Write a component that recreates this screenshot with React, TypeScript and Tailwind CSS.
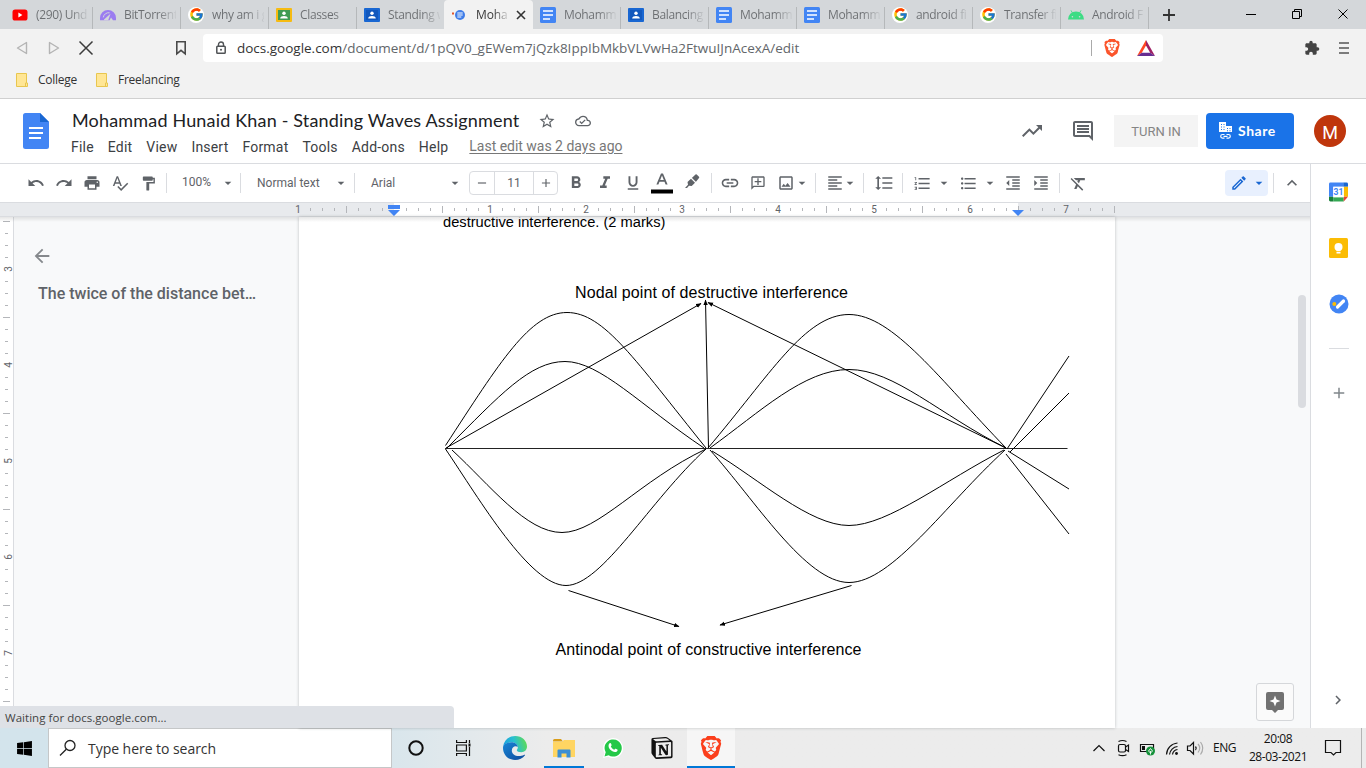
import React from "react";
import { FaWindows } from "react-icons/fa";
import { FcGoogle } from "react-icons/fc";
import { SiBrave, SiNotion } from "react-icons/si";
import {
  MdUndo, MdRedo, MdPrint, MdSpellcheck, MdFormatPaint, MdArrowDropDown, MdFormatBold, MdFormatItalic,
  MdFormatUnderlined, MdInsertLink, MdOutlineAddComment, MdOutlineImage, MdFormatAlignLeft, MdFormatLineSpacing,
  MdFormatListNumbered, MdFormatListBulleted, MdFormatIndentDecrease, MdFormatIndentIncrease, MdFormatClear,
  MdExpandLess, MdStarBorder, MdOutlineCloudDone, MdTrendingUp, MdOutlineComment, MdArrowBack, MdAdd,
  MdExtension, MdChevronRight, MdRemove, MdOutlineEdit,
} from "react-icons/md";

const segoe = "font-['Open_Sans','Noto_Sans',sans-serif]";

function YouTube() {
  return (
    <svg width="16" height="16" viewBox="0 0 16 16">
      <rect x="0.5" y="2.5" width="15" height="11" rx="2.6" fill="#f00" />
      <path d="M6.4 5.6v4.8L10.4 8z" fill="#fff" />
    </svg>
  );
}
function Gauge() {
  return (
    <svg width="16" height="16" viewBox="0 0 16 16">
      <path d="M0 13.2V11a8 8 0 0 1 16 0V13.2H13L11 10.6 9.6 13.2Z" fill="#9b7cf0" />
      <path d="M4 12.600L10.500 6.800 8.200 13.200H4Z" fill="#d4d7da" />
      <path d="M3.300 10.400A5.400 5.400 0 0 1 9.600 5.800" stroke="#d4d7da" strokeWidth="1" fill="none" />
    </svg>
  );
}
function GoogleG() {
  return (
    <span className="flex size-4 items-center justify-center rounded-full bg-white">
      <FcGoogle size={15} />
    </span>
  );
}
function Classroom({ blue = false }: { blue?: boolean }) {
  return (
    <svg width="16" height="16" viewBox="0 0 16 16">
      <rect y="1" width="16" height="14" rx="1" fill={blue ? "#1967d2" : "#f6bb12"} />
      <rect x="2" y="3" width="12" height="10" fill={blue ? "#1258bd" : "#3f9b52"} />
      <circle cx="8" cy="6.3" r="1.7" fill="#fff" />
      <path d="M4.2 11.5c0-2 2-2.6 3.8-2.6s3.8.6 3.8 2.6z" fill="#fff" />
    </svg>
  );
}
function DocsFavicon() {
  return (
    <svg width="16" height="16" viewBox="0 0 16 16">
      <rect width="16" height="16" rx="1.5" fill="#4285f4" />
      <path d="M3 4h10M3 8h10M3 12h7" stroke="#fff" strokeWidth="1.6" />
    </svg>
  );
}
function LoadingDocs() {
  return (
    <svg width="16" height="16" viewBox="0 0 16 16">
      <circle cx="9" cy="8" r="5" fill="#3f7de8" />
      <path d="M6.3 6h5.4M6.3 8h5.4M6.3 10h4" stroke="#fff" strokeWidth="1.1" />
      <rect x="1" y="5.5" width="2" height="2" fill="#e2552b" />
    </svg>
  );
}
function AndroidHead() {
  return (
    <svg width="16" height="16" viewBox="0 0 16 16">
      <path d="M0 12.500A8 8 0 0 1 16 12.500Z" fill="#3ddc84" />
      <path d="M3 3.400L5 7M13 3.400L11 7" stroke="#3ddc84" strokeWidth="0.900" />
      <circle cx="4.400" cy="9.800" r="0.800" fill="#d4d7da" />
      <circle cx="11.600" cy="9.800" r="0.800" fill="#d4d7da" />
    </svg>
  );
}

function Tab({ icon, label, sep = true, first = false }: { icon: React.ReactNode; label: string; sep?: boolean; first?: boolean }) {
  return (
    <div className={`flex h-full shrink-0 items-center ${first ? "w-[93px] pl-3" : "w-[88px] pl-[7px]"}`}>
      <span className="flex size-4 shrink-0 items-center justify-center">{icon}</span>
      <span className="ml-2 w-[52px] overflow-hidden whitespace-nowrap bg-linear-to-r from-[#6b6e71] from-65% to-[#6b6e71]/10 bg-clip-text text-[12px] leading-4 tracking-[-0.35px] text-transparent">
        {label}
      </span>
      <span className={`mt-[7px] ml-auto h-[22px] w-px ${sep ? "bg-[#b5b8ba]" : ""}`} />
    </div>
  );
}

function TabStrip() {
  return (
    <div className="flex h-[29px] bg-[#d4d7da]">
      <Tab first icon={<YouTube />} label="(290) Und" />
      <Tab icon={<Gauge />} label="BitTorrent" />
      <Tab icon={<GoogleG />} label="why am i g" />
      <Tab icon={<Classroom />} label="Classes" />
      <Tab icon={<Classroom blue />} label="Standing w" sep={false} />
      <div className="-ml-[1px] flex h-full w-[89px] shrink-0 items-center rounded-t-[4px] bg-[#f2f2f2] pl-[7px]">
        <LoadingDocs />
        <span className="ml-[9px] w-[32px] overflow-hidden whitespace-nowrap bg-linear-to-r from-[#333] from-55% to-[#333]/15 bg-clip-text text-[12px] leading-4 tracking-[-0.1px] text-transparent">
          Moha
        </span>
        <svg className="ml-2" width="10" height="10" viewBox="0 0 10 10">
          <path d="M1 1l8 8M9 1L1 9" stroke="#333" strokeWidth="1.6" />
        </svg>
      </div>
      <Tab icon={<DocsFavicon />} label="Mohamm" />
      <Tab icon={<Classroom blue />} label="Balancing" />
      <Tab icon={<DocsFavicon />} label="Mohamm" />
      <Tab icon={<DocsFavicon />} label="Mohamm" />
      <Tab icon={<GoogleG />} label="android fi" />
      <Tab icon={<GoogleG />} label="Transfer fi" />
      <Tab icon={<AndroidHead />} label="Android F" />
      <svg className="mt-[9px] ml-[14px]" width="12" height="12" viewBox="0 0 12 12">
        <path d="M6 0v12M0 6h12" stroke="#333" strokeWidth="1.8" />
      </svg>
      <svg className="ml-auto" width="140" height="29" viewBox="1226 0 140 29" fill="none" stroke="#000">
        <path d="M1246 14.5h10" />
        <path d="M1292.5 11.500h7v7h-7zM1294.500 11.500v-2h7v7h-2" />
        <path d="M1338.500 9.500l9 9M1347.500 9.500l-9 9" />
      </svg>
    </div>
  );
}

function NavBar() {
  return (
    <div className="flex h-[38px] items-center bg-[#f2f2f2]">
      <svg width="203" height="38" viewBox="0 29 203 38" fill="none">
        <path d="M26.500 42.500v11l-9-5.500z" stroke="#b4b4b4" strokeWidth="1.400" strokeLinejoin="round" />
        <path d="M49.500 42.500v11l9-5.500z" stroke="#b4b4b4" strokeWidth="1.400" strokeLinejoin="round" />
        <path d="M79.500 41.500l13 13M92.500 41.500l-13 13" stroke="#3c3c3c" strokeWidth="1.500" />
        <path d="M176.800 41.800h8.400v12l-4.200-3.500-4.200 3.500z" stroke="#4a4a4a" strokeWidth="1.600" />
      </svg>
      <div className="flex h-7 w-[960px] items-center rounded bg-white pl-[13px]">
        <svg width="10" height="14" viewBox="0 0 10 14" fill="none">
          <rect x="0.800" y="5.300" width="8.400" height="7" rx="0.800" stroke="#505356" strokeWidth="1.500" />
          <path d="M2.500 5V3.500a2.500 2.500 0 0 1 5 0V5" stroke="#505356" strokeWidth="1.400" />
          <circle cx="5" cy="8.800" r="1" fill="#505356" />
        </svg>
        <span className="ml-[11px] whitespace-nowrap text-[13.500px] tracking-[-0.01px] text-[#62666a]">
          <span className="text-[#333]">docs.google.com</span>/document/d/1pQV0_gEWem7jQzk8IppIbMkbVLVwHa2FtwuIJnAcexA/edit
        </span>
        <span className="ml-auto h-4 w-px bg-[#aaa]" />
        <SiBrave className="ml-[11px] text-[#fb542b]" size={18} />
        <svg className="mr-[8px] ml-4" width="18" height="16" viewBox="0 0 18 16">
          <path d="M9 0L0 16 4.800 12.700 9 5.500z" fill="#ff4724" />
          <path d="M9 0l9 16-4.800-3.300L9 5.500z" fill="#9e1f63" />
          <path d="M0 16h18l-4.800-3.300H4.800z" fill="#662d91" />
        </svg>
      </div>
      <MdExtension className="ml-[141px] text-[#444]" size={16} />
      <svg className="ml-[19px]" width="10" height="12" viewBox="0 0 10 12">
        <path d="M0 1h10M0 6h10M0 11h10" stroke="#555" strokeWidth="1.600" />
      </svg>
    </div>
  );
}

function Folder() {
  return (
    <svg width="12" height="14" viewBox="0 0 12 14">
      <path d="M.5.500h10v9.500h1v3.500h-11z" fill="#ffe695" stroke="#e8c64f" />
      <path d="M9.500 13.500v-3.500h1" fill="none" stroke="#e8c64f" />
    </svg>
  );
}

function Bookmarks() {
  return (
    <div className="flex h-8 items-start border-b border-[#d0d0d0] bg-[#f2f2f2] pt-[5px] pl-4 text-[12px] leading-4 tracking-[-0.25px] text-[#333]">
      <span className="flex w-20 items-center gap-[10px]"><Folder />College</span>
      <span className="flex items-center gap-[10px]"><Folder />Freelancing</span>
    </div>
  );
}

function Header() {
  return (
    <header className="flex h-[65px] border-b border-[#dadce0] bg-white font-[Roboto,sans-serif]">
      <svg className="mt-[14px] ml-[23px] shrink-0" width="26" height="36" viewBox="0 0 26 36">
        <path d="M2.500 0H17l9 9v24.500a2.500 2.500 0 0 1-2.500 2.500h-21A2.500 2.500 0 0 1 0 33.500v-31A2.500 2.500 0 0 1 2.500 0z" fill="#4285f4" />
        <path d="M17 0l9 9h-9z" fill="#1967d2" />
        <path d="M6 15h14M6 20h14M6 25h12" stroke="#fff" strokeWidth="2" />
      </svg>
      <div className="ml-[22px] pt-[10px]">
        <div className="flex h-6 items-center pl-px">
          <span className="w-[447px] -translate-y-px whitespace-nowrap font-[Lato,sans-serif] text-[18px] tracking-[0.17px] text-[#202124]">
            Mohammad Hunaid Khan - Standing Waves Assignment
          </span>
          <MdStarBorder className="ml-[19px] text-[#5f6368]" size={18} />
          <MdOutlineCloudDone className="ml-[19px] text-[#5f6368]" size={16} />
        </div>
        <div className="mt-[5px] flex h-[18px] items-center gap-[14px] text-[14px] leading-[18px] tracking-[0.2px] text-[#3c4043]">
          <span>File</span><span>Edit</span><span>View</span><span>Insert</span><span>Format</span>
          <span>Tools</span><span>Add-ons</span><span>Help</span>
          <span className="ml-[7px] -translate-y-px tracking-[-0.02px] text-[#777] underline underline-offset-2">Last edit was 2 days ago</span>
        </div>
      </div>
      <div className="ml-auto flex h-16 items-center pr-5">
        <MdTrendingUp className="text-[#5f6368]" size={24} />
        <MdOutlineComment className="ml-[27px] text-[#5f6368]" size={24} />
        <span className="ml-[19px] flex h-8 w-[84px] items-center justify-center bg-[#f4f4f4] text-[13px] text-[#858585]"><span className="translate-y-px">TURN IN</span></span>
        <span className="ml-2 flex h-9 w-[88px] items-center rounded bg-[#1a73e8] pl-[13px] text-white">
          <svg width="14" height="18" viewBox="0 0 14 18">
            <path d="M0 0h7v4h6v6H0z" fill="#fff" />
            <path d="M2 2h1v1H2zM4.500 2h1v1h-1zM2 4.500h1v1H2zM4.500 4.500h1v1h-1zM2 7h1v1H2zM4.500 7h1v1h-1zM8 6h1v1H8zM10.500 6h1v1h-1zM8 8.300h1v1H8zM10.500 8.300h1v1h-1z" fill="#1a73e8" />
            <path d="M5.500 12.500h-2a1.800 1.800 0 0 0 0 3.600h2M7.500 12.500h2a1.800 1.800 0 0 1 0 3.600h-2M4.500 14.300h4" stroke="#fff" strokeWidth="1.200" fill="none" />
          </svg>
          <span className="ml-[5px] -translate-y-px font-[Lato,sans-serif] text-[14px] font-bold tracking-[0.55px]">Share</span>
        </span>
        <span className="ml-5 flex size-8 items-center justify-center rounded-full bg-[#bf360c] text-[18px] text-white"><span className="translate-y-px">M</span></span>
      </div>
    </header>
  );
}

const Sep = ({ className = "" }: { className?: string }) => <span className={`h-5 w-px shrink-0 bg-[#dadce0] ${className}`} />;
const Cell = ({ className, children }: { className: string; children: React.ReactNode }) => (
  <span className={`flex shrink-0 items-center justify-center ${className}`}>{children}</span>
);
const Caret = ({ className = "" }: { className?: string }) => (
  <Cell className={`w-4 ${className}`}><MdArrowDropDown size={18} /></Cell>
);

function Toolbar() {
  return (
    <div className="flex h-[39px] items-center border-b border-[#dadce0] bg-white pl-[22px] font-[Roboto,sans-serif] text-[12px] text-[#5f6368]">
      <Cell className="w-7"><MdUndo size={18} /></Cell>
      <Cell className="w-7"><MdRedo size={18} /></Cell>
      <Cell className="w-7"><MdPrint size={18} /></Cell>
      <Cell className="w-7"><MdSpellcheck size={18} /></Cell>
      <Cell className="w-7"><MdFormatPaint size={17} /></Cell>
      <Sep className="ml-1" />
      <span className="ml-[15px] w-[38px] -translate-y-px">100%</span>
      <Caret />
      <Sep className="ml-1" />
      <span className="ml-4 w-[76px] whitespace-nowrap">Normal text</span>
      <Caret />
      <Sep className="ml-[5px]" />
      <span className="ml-4 w-[76px]">Arial</span>
      <Caret />
      <div className="ml-[6px] flex h-6 w-[89px] rounded-sm border border-[#dadce0]">
        <Cell className="w-6"><MdRemove size={14} /></Cell>
        <Cell className="w-10 border-x border-[#dadce0]">11</Cell>
        <Cell className="w-6"><MdAdd size={14} /></Cell>
      </div>
      <Cell className="ml-1 w-7"><MdFormatBold size={20} /></Cell>
      <Cell className="ml-px w-7"><MdFormatItalic size={20} /></Cell>
      <Cell className="w-7"><MdFormatUnderlined size={18} /></Cell>
      <Cell className="w-[30px]">
        <svg width="22" height="22" viewBox="0 0 22 22">
          <path d="M10 1.500h2l4.600 11h-2l-1.100-2.700h-5L7.400 12.500h-2zM9.200 8h3.600L11 3.600z" fill="#5f6368" />
          <path d="M0 17.500h22v4H0z" fill="#000" />
        </svg>
      </Cell>
      <Cell className="w-[30px] -translate-y-px">
        <svg width="16" height="16" viewBox="0 0 16 16" fill="#5f6368">
          <path d="M1 14l3-3.200L3.500 8 7 4.700 11 8.700 7.700 12 5 11.700 3 14z" />
          <path d="M7.800 4L11.500.500q.600-.500 1.200 0l2.300 2.300q.600.600 0 1.200L11.800 7.900z" />
          <path d="M7.200 3.800l5 5" stroke="#fff" strokeWidth="0.800" />
        </svg>
      </Cell>
      <Sep className="ml-[4px]" />
      <Cell className="ml-[4px] w-7"><MdInsertLink size={20} /></Cell>
      <Cell className="w-7"><MdOutlineAddComment className="-scale-x-100" size={16} /></Cell>
      <Cell className="w-[27px]"><MdOutlineImage size={18} /></Cell>
      <Caret className="-ml-[5px]" />
      <Sep className="ml-[5px]" />
      <Cell className="ml-[5px] w-7"><MdFormatAlignLeft size={18} /></Cell>
      <Caret className="-ml-[7px]" />
      <Sep className="ml-[5px]" />
      <Cell className="ml-[6px] w-7"><MdFormatLineSpacing size={20} /></Cell>
      <Sep className="ml-[4px]" />
      <Cell className="ml-[5px] w-7"><MdFormatListNumbered size={19} /></Cell>
      <Caret />
      <Cell className="ml-[2px] w-7"><MdFormatListBulleted size={19} /></Cell>
      <Caret />
      <Cell className="ml-[1px] w-7"><MdFormatIndentDecrease size={18} /></Cell>
      <Cell className="w-7"><MdFormatIndentIncrease size={18} /></Cell>
      <Sep className="ml-[4px]" />
      <Cell className="ml-[4px] w-7"><MdFormatClear size={19} /></Cell>
      <div className="ml-auto flex h-[26px] w-[43px] shrink-0 items-center rounded bg-[#e8f0fe] pl-[5px] text-[#1967d2]">
        <MdOutlineEdit size={18} />
        <Caret className="ml-[3px]" />
      </div>
      <Sep className="ml-[5px]" />
      <Cell className="mr-2 ml-[8px] w-5"><MdExpandLess size={20} /></Cell>
    </div>
  );
}

const hTicks = Array.from({ length: 69 }, (_, i) => 298 + i * 12);
const vTicks = Array.from({ length: 41 }, (_, i) => 221 + i * 12);

function HorizontalRuler() {
  return (
    <svg className="block h-[14px] w-full shrink-0 border-b border-[#dadce0]" viewBox="0 203 1310 13" preserveAspectRatio="none">
      <rect x="0" y="203" width="1310" height="13" fill="#e8eaed" />
      <rect x="394" y="203" width="624" height="13" fill="#fff" />
      {hTicks.map((x, i) =>
        i % 8 === 0 ? null : i % 4 === 0 || i === 68 ? (
          <rect key={x} x={x} y="206" width="1" height="7" fill="#b4b6ba" />
        ) : (
          <rect key={x} x={x} y="208" width="1" height="3" fill="#b4b6ba" />
        ),
      )}
      {[1, 0, 1, 2, 3, 4, 5, 6, 7].map((n, i) =>
        i === 1 ? null : (
          <text key={i} x={298 + i * 96} y="213" textAnchor="middle" fontSize="10" fontFamily="Roboto" fill="#5f6368">{n}</text>
        ),
      )}
      <path d="M388 205h12v4h-12zM388 210h12l-6 6z" fill="#4285f4" />
      <path d="M1012 210h12l-6 6z" fill="#4285f4" />
    </svg>
  );
}

function VerticalRuler() {
  return (
    <svg className="block h-full w-[14px] shrink-0 border-r border-[#dadce0] bg-white" viewBox="0 217 13 511">
      {vTicks.map((y, i) =>
        i % 8 === 4 ? (
          <text key={y} transform={`translate(11.500 ${y}) rotate(-90)`} textAnchor="middle" fontSize="10" fontFamily="Roboto" fill="#5f6368">
            {3 + (i - 4) / 8}
          </text>
        ) : (
          <rect key={y} x={i % 8 === 0 ? 3 : 5} y={y} width={i % 8 === 0 ? 7 : 3} height="1" fill="#b4b6ba" />
        ),
      )}
    </svg>
  );
}

function WaveDiagram() {
  return (
    <svg className="block" width="672" height="480" viewBox="443 240 672 480">
      <defs>
        <marker id="tip" markerWidth="6" markerHeight="5" refX="5" refY="2.500" orient="auto" markerUnits="userSpaceOnUse">
          <path d="M0 0.300L5.500 2.500 0 4.700z" fill="#000" />
        </marker>
      </defs>
      <g fontFamily="Liberation Sans" fontSize="16" fill="#000">
        <text x="575" y="297.500" textLength="273">Nodal point of destructive interference</text>
        <text x="555.500" y="655" textLength="306">Antinodal point of constructive interference</text>
      </g>
      <g stroke="#000" strokeWidth="1" fill="none">
        <path d="M445 448.500H1067.500" stroke="#222" />
        <path d="M445.500 445.500C500 362 530 312.500 567 312.500S635 360 706 448" />
        <path d="M447 448C500 395 530 361.500 565 361.500S640 405 704 448" />
        <path d="M452 450C490 485 526 532.500 562 532.500S640 480 706 449" />
        <path d="M445.500 449C480 500 530 585.500 566 585.500S650 500 706 449" />
        <path d="M708 448C770 375 805 314.500 849 314.500S940 380 1006 448" />
        <path d="M710 448C760 412 804 369.500 849 369.500S940 415 1006 448" />
        <path d="M712 451C760 480 810 525.500 849 525.500S945 480 1004 450" />
        <path d="M710 450C755 500 806 582.500 849 582.500S945 505 1005 450" />
        <path d="M1007 449L1069 356M1010 452L1069 393M1008 451L1069 489M1006 454L1069 534" />
        <path d="M446 448L701 303.500" markerEnd="url(#tip)" />
        <path d="M708.500 448L705.500 300" markerEnd="url(#tip)" />
        <path d="M1006 448L708 302.500" markerEnd="url(#tip)" />
        <path d="M568.500 590.500L679 626.500" markerEnd="url(#tip)" />
        <path d="M851.500 585.500L720 625" markerEnd="url(#tip)" />
      </g>
    </svg>
  );
}

function Editor() {
  return (
    <div className="relative flex min-h-0 flex-1 bg-[#f8f9fa]">
      <VerticalRuler />
      <aside className="w-[285px] shrink-0 pl-6 font-[Roboto,sans-serif]">
        <MdArrowBack className="mt-[28px] -ml-[7px] text-[#85888c]" size={22} />
        <div className="mt-[17px] whitespace-nowrap text-[16px] leading-5 font-medium text-[#5f6368]">The twice of the distance bet…</div>
      </aside>
      <main className="w-[816px] shrink-0 overflow-hidden bg-white pl-36 shadow-[0_0_3px_rgba(60,64,67,0.3)]">
        <p className="-mt-[3px] h-[26px] font-['Liberation_Sans',Arial,sans-serif] text-[14.667px] leading-4 text-black">
          destructive interference. (2 marks)
        </p>
        <WaveDiagram />
      </main>
      <div className="flex flex-1 flex-col items-end">
        <div className="mt-[78px] mr-[4px] h-[113px] w-2 rounded bg-[#dadce0]" />
        <div className="mt-auto mr-[16px] mb-[7px] flex size-[38px] items-center justify-center rounded-[3px] border border-[#d5d7da] bg-[#fafafa]">
          <svg width="18" height="21" viewBox="0 0 18 21">
            <path d="M2 0h14a2 2 0 0 1 2 2v14a2 2 0 0 1-2 2h-4l-3 3-3-3H2a2 2 0 0 1-2-2V2a2 2 0 0 1 2-2z" fill="#717171" />
            <path d="M9 3.500l1.500 4 4 1.500-4 1.500L9 14.500l-1.500-4-4-1.500 4-1.500z" fill="#fff" />
          </svg>
        </div>
      </div>
      <div className="absolute inset-x-0 top-0 h-[5px] bg-linear-to-b from-black/10 to-transparent" />
    </div>
  );
}

function SidePanel() {
  return (
    <nav className="flex w-14 shrink-0 flex-col items-center border-l border-[#dadce0] bg-white pt-[18px]">
      <svg width="19" height="20" viewBox="0 0 20 20">
        <path d="M1.500 0H15v4.500H4.500V15H0V1.500A1.500 1.500 0 0 1 1.500 0z" fill="#4285f4" />
        <path d="M15 0h3.500A1.500 1.500 0 0 1 20 1.500V4.500h-5z" fill="#1967d2" />
        <path d="M15.500 4.500H20V15h-4.500z" fill="#fbbc04" />
        <path d="M4.500 15.500h11V20h-11z" fill="#34a853" />
        <path d="M0 15h4.500v5h-3A1.500 1.500 0 0 1 0 18.500z" fill="#188038" />
        <path d="M15.500 15H20l-4.500 5z" fill="#ea4335" />
        <path d="M4.500 4.500h11v11h-11z" fill="#fff" />
        <text x="10" y="13.400" textAnchor="middle" fontFamily="Roboto" fontWeight="700" fontSize="9" fill="#4285f4">31</text>
      </svg>
      <svg className="mt-9" width="19" height="20" viewBox="0 0 19 20">
        <rect width="19" height="20" rx="1.500" fill="#fbbc04" />
        <circle cx="9.500" cy="9" r="4" fill="#fff" />
        <path d="M7.500 11h4v2.200h-4zM7.500 14h4v1.400h-4z" fill="#fff" />
      </svg>
      <svg className="mt-9" width="20" height="20" viewBox="0 0 20 20">
        <circle cx="10" cy="10" r="9.500" fill="#4285f4" />
        <path d="M8.500 13L14.500 7" stroke="#fff" strokeWidth="3.200" strokeLinecap="round" />
        <circle cx="5.300" cy="10" r="2" fill="#fbbc04" />
      </svg>
      <span className="mt-[34px] h-px w-5 bg-[#dadce0]" />
      <MdAdd className="mt-[35px] text-[#80868b]" size={18} />
      <MdChevronRight className="mt-auto mb-[19px] -ml-[2px] text-[#5f6368]" size={18} />
    </nav>
  );
}

function Edge() {
  return (
    <svg width="24" height="24" viewBox="0 0 24 24">
      <defs>
        <linearGradient id="edgeTop" x1="0" y1="0.600" x2="1" y2="0.400">
          <stop offset="0" stopColor="#1a9ee0" /><stop offset="0.500" stopColor="#28bfd0" /><stop offset="1" stopColor="#5edb54" />
        </linearGradient>
        <linearGradient id="edgeLow" x1="0" y1="0" x2="1" y2="1">
          <stop offset="0" stopColor="#1785d6" /><stop offset="1" stopColor="#0d4a9c" />
        </linearGradient>
      </defs>
      <path d="M0 11C1 4 6 0 12.200 0 19 0 24 4.800 24 10.500c0 3.500-2.500 5.700-5.700 5.700-2.600 0-4.500-1-4.500-2 0-.800 1-1 1-3C14.800 8.500 12 6.200 8.500 6.200 4.500 6.200 1 8.500 0 11z" fill="url(#edgeTop)" />
      <path d="M0 12C0 8.500 4 6.200 8.500 6.200c3.500 0 6.300 2.300 6.300 4.600C12 9 8.800 11 8.800 14.500c0 4.500 6 7.500 12.500 4.200.500-.200 1 .200.700.600C20 22.200 16 24 12 24 5 24 0 18.500 0 12z" fill="url(#edgeLow)" />
    </svg>
  );
}

function Explorer() {
  return (
    <svg width="22" height="20" viewBox="0 0 22 20">
      <path d="M0 2.500A1.500 1.500 0 0 1 1.500 1H8l2 2.500H0z" fill="#d99c18" />
      <path d="M0 3.700h9L11 2h11v17H0z" fill="#ffd562" />
      <path d="M4.500 18.500v-6a1 1 0 0 1 1-1h11a1 1 0 0 1 1 1v7h-4v-4h-5v4h-4z" fill="#3b8fd4" />
    </svg>
  );
}

function Taskbar() {
  return (
    <footer className={`flex h-10 shrink-0 bg-linear-to-r from-[#d3e4ec] from-25% via-[#ececec] via-40% to-[#ececec] ${segoe}`}>
      <Cell className="w-12"><FaWindows size={17} /></Cell>
      <div className="flex w-[344px] items-center border border-[#c5c7c8] bg-white pl-[10px]">
        <svg width="18" height="18" viewBox="0 0 18 18" fill="none" stroke="#222" strokeWidth="1.300">
          <circle cx="11" cy="6.500" r="5" /><path d="M7.300 10.200L1 16.500" />
        </svg>
        <span className="ml-[11px] text-[14px] tracking-[-0.04px] text-[#333]">Type here to search</span>
      </div>
      <Cell className="w-12"><svg width="16" height="16" viewBox="0 0 16 16"><circle cx="8" cy="8" r="6.700" fill="none" stroke="#111" strokeWidth="2" /></svg></Cell>
      <Cell className="w-12">
        <svg width="16" height="16" viewBox="0 0 16 16" fill="none" stroke="#111" strokeWidth="1.200">
          <path d="M.6 5h9.800v6H.6zM.6 0v2.500h9.800V0M.6 16v-2.500h9.800V16M13.500 0v3M13.500 7v9" />
          <path d="M12.500 3.500h2v3h-2z" fill="#111" stroke="none" />
        </svg>
      </Cell>
      <Cell className="ml-[3px] w-12"><Edge /></Cell>
      <Cell className="ml-[5px] w-10 border-b-2 border-[#0078d7] pt-px"><Explorer /></Cell>
      <Cell className="ml-[5px] w-12">
        <svg width="20" height="20" viewBox="0 0 20 20">
          <path d="M0 20l1.400-5A10 10 0 1 1 5 18.700z" fill="#fff" />
          <path d="M1.500 18.500l1.200-4.200A8.600 8.600 0 1 1 5.600 17.300z" fill="#24c848" />
          <path d="M6.600 5.200c.7-.6 1.100-.3 1.400.4l.6 1.500c.1.500-.3.900-.8 1.400.8 1.500 2 2.600 3.500 3.200.5-.5.800-1.200 1.400-1l1.700.8c.5.400.1 1.400-.5 1.900-2 1.500-5 0-6.600-1.600C5.700 10 4.700 7 6.600 5.200z" fill="#fff" />
        </svg>
      </Cell>
      <Cell className="w-[50px]"><SiNotion className="text-[#111]" size={22} /></Cell>
      <Cell className="w-12 border-b-2 border-[#0078d7] bg-[#f6f6f6] pt-px"><SiBrave className="text-[#fb3f1c]" size={24} /></Cell>
      <svg className="ml-auto" width="120" height="40" viewBox="1088 728 120 40" fill="none" stroke="#111" strokeWidth="1.200">
        <path d="M1093.500 751l5.500-5.500 5.500 5.500" />
        <rect x="1118.500" y="744.500" width="7" height="7.500" rx="1.500" />
        <path d="M1125.500 747l3-2v6.500l-3-2M1118.500 741.500q4-2 8 0M1118.500 754.700q4 2 8 0" />
        <path d="M1140.500 744.500h13v7h-13z" />
        <path d="M1142 746h3v4h-3z" fill="#111" stroke="none" />
        <circle cx="1150.500" cy="751" r="4.500" fill="#15913a" stroke="none" />
        <path d="M1150.500 748.500l2 2.500-2 2-2-2zM1150.500 751v3.500" stroke="#fff" strokeWidth="0.900" />
        <path d="M1166.500 754.500a12 12 0 0 1 11-11.500M1169.500 754.500a9 9 0 0 1 8-8M1172.500 754.500a6 6 0 0 1 5-5" />
        <circle cx="1176.500" cy="753.500" r="1.400" fill="#111" stroke="none" />
        <path d="M1187.500 746h2.500l3.500-3.500v11.500l-3.500-3.500h-2.500z" />
        <path d="M1195.500 746.500q1.500 1.800 0 3.500" />
        <path d="M1198 744q3.500 4 0 8.500M1200.500 742q4.500 6 0 12.500" stroke="#aaa" />
      </svg>
      <span className="ml-[5px] w-[23px] self-center text-[12px] tracking-[-0.45px] text-[#111]">ENG</span>
      <div className="ml-[7px] flex w-[70px] flex-col items-center pt-[2px] text-[12px] leading-[18px] tracking-[-0.45px] text-[#111]">
        <span>20:08</span>
        <span className="whitespace-nowrap">28-03-2021</span>
      </div>
      <svg className="mt-[11px] ml-[11px]" width="18" height="18" viewBox="0 0 18 18" fill="none" stroke="#111" strokeWidth="1.200">
        <path d="M1.500 1.500h15v12h-4.500l-2.500 2.500-2.500-2.500h-5.500z" />
      </svg>
      <span className="mr-[4px] ml-[19px] w-px bg-[#b4b4b4]" />
    </footer>
  );
}

export default function App() {
  return (
    <div className={`relative flex h-[768px] w-[1366px] flex-col overflow-hidden bg-white ${segoe}`}>
      <TabStrip />
      <NavBar />
      <Bookmarks />
      <Header />
      <div className="flex min-h-0 flex-1">
        <div className="flex w-[1310px] shrink-0 flex-col">
          <Toolbar />
          <HorizontalRuler />
          <Editor />
        </div>
        <SidePanel />
      </div>
      <Taskbar />
      <div className="absolute bottom-10 left-0 flex h-[22px] w-[454px] items-center rounded-tr bg-[#dee1e6] pt-px pl-[5px] text-[11.500px] tracking-[0.04px] text-[#444]">
        Waiting for docs.google.com...
      </div>
    </div>
  );
}
